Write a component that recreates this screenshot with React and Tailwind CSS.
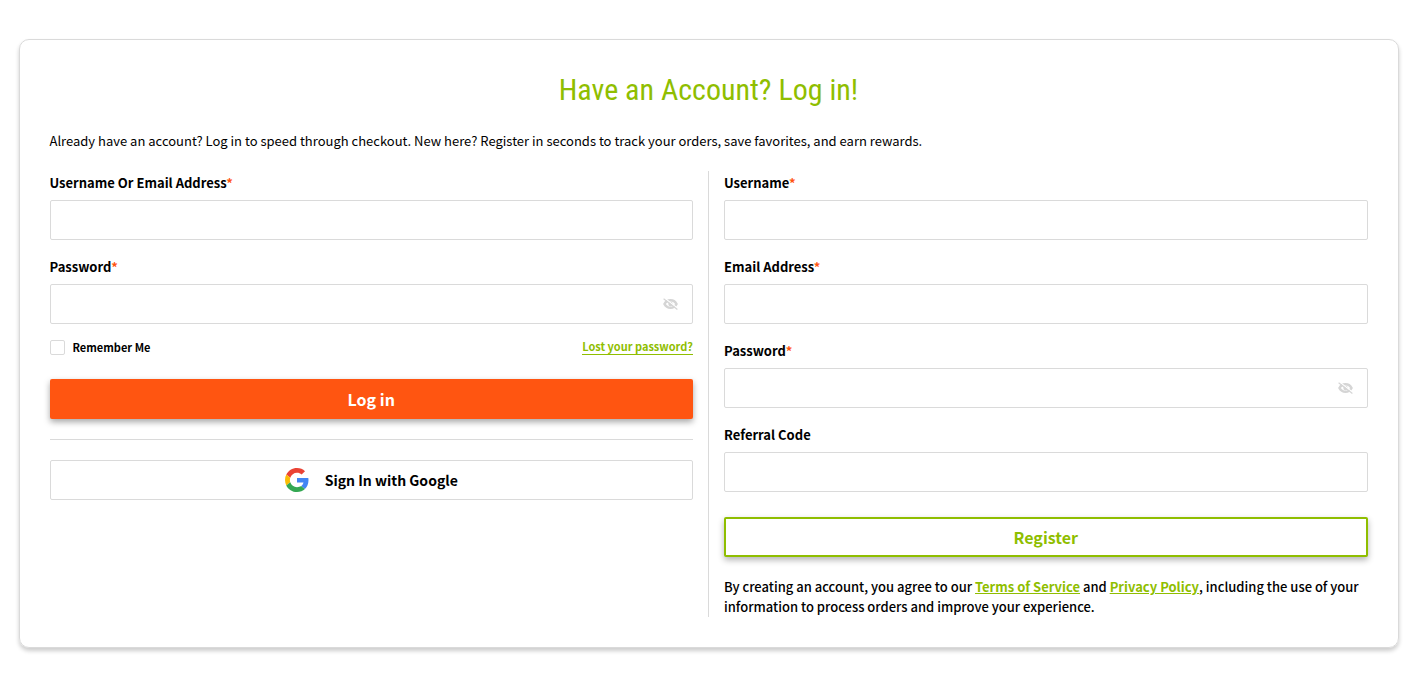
import React, { useState } from 'react';

const INPUT = 'block h-10 w-full rounded-xs border border-[#dadada] bg-white px-3 text-[13px] outline-none focus:border-[#8fbe00]';

const EyeOff = () => (
  <svg viewBox="0 0 15 12" className="h-3 w-[15px]" fill="none" aria-hidden="true">
    <path d="M1.5 6C2.8 3.4 4.9 2.2 7.5 2.2S12.2 3.4 13.5 6C12.2 8.6 10.1 9.8 7.5 9.8S2.8 8.6 1.5 6z" stroke="currentColor" strokeWidth="2.5" />
    <circle cx="7.5" cy="6" r="2.2" fill="currentColor" />
    <path d="M1.5 0l13.5 10.6" stroke="#fff" strokeWidth="1.2" />
    <path d="M.6 .8l13.8 10.6" stroke="currentColor" strokeWidth="1.2" />
  </svg>
);

const Field = ({ id, label, type = 'text', required }) => {
  const [visible, setVisible] = useState(false);
  const isPassword = type === 'password';

  return (
    <div>
      <label htmlFor={id} className="mb-[5px] block text-[13px] leading-6 font-bold">
        {label}
        {required && <span className="text-[#ff5511]">*</span>}
      </label>
      <div className="relative">
        <input
          id={id}
          type={isPassword && visible ? 'text' : type}
          required={required}
          className={INPUT}
        />
        {isPassword && (
          <button
            type="button"
            aria-label="Show password"
            onClick={() => setVisible(!visible)}
            className="absolute inset-y-0 right-[15px] flex items-center text-[#d5d5d5]"
          >
            <EyeOff />
          </button>
        )}
      </div>
    </div>
  );
};

const GoogleLogo = () => (
  <svg viewBox="0 0 48 48" className="h-6 w-6" aria-hidden="true">
    <path fill="#EA4335" d="M24 9.5c3.54 0 6.71 1.22 9.21 3.6l6.85-6.85C35.9 2.38 30.47 0 24 0 14.62 0 6.51 5.38 2.56 13.22l7.98 6.19C12.43 13.72 17.74 9.5 24 9.5z" />
    <path fill="#4285F4" d="M46.98 24.55c0-1.57-.15-3.09-.38-4.55H24v9.02h12.94c-.58 2.96-2.26 5.48-4.78 7.18l7.73 6c4.51-4.18 7.09-10.36 7.09-17.65z" />
    <path fill="#FBBC05" d="M10.53 28.59c-.48-1.45-.76-2.99-.76-4.59s.27-3.14.76-4.59l-7.98-6.19C.92 16.46 0 20.12 0 24c0 3.88.92 7.54 2.56 10.78l7.97-6.19z" />
    <path fill="#34A853" d="M24 48c6.48 0 11.93-2.13 15.89-5.81l-7.73-6c-2.15 1.45-4.92 2.3-8.16 2.3-6.26 0-11.57-4.22-13.47-9.91l-7.98 6.19C6.51 42.62 14.62 48 24 48z" />
  </svg>
);

const LoginForm = () => (
  <form className="flex-1 pr-[15px]" onSubmit={(e) => e.preventDefault()}>
    <div className="flex flex-col gap-[15px]">
      <Field id="login-user" label="Username Or Email Address" required />
      <Field id="login-password" label="Password" type="password" required />
    </div>

    <div className="mt-[11px] flex h-6 items-center justify-between text-[11px] font-bold">
      <label className="flex items-center gap-2">
        <input
          type="checkbox"
          className="h-[15px] w-[15px] appearance-none rounded-xs border border-[#dadada] bg-white checked:bg-[#8fbe00]"
        />
        Remember Me
      </label>
      <a href="#lost" className="border-b border-[#8fbe00] leading-[15px] text-[#8fbe00]">
        Lost your password?
      </a>
    </div>

    <button
      type="submit"
      className="mt-5 block h-10 w-full rounded-xs bg-[#ff5511] text-base font-bold text-white shadow-[0_3px_6px_rgba(0,0,0,0.35)]"
    >
      Log in
    </button>

    <hr className="my-5 border-[#dadada]" />

    <button
      type="button"
      className="flex h-10 w-full items-center justify-center gap-4 rounded-xs border border-[#dadada] bg-white text-sm font-bold"
    >
      <GoogleLogo />
      Sign In with Google
    </button>
  </form>
);

const RegisterForm = () => (
  <form className="flex-1 border-l border-[#dadada] pl-[15px]" onSubmit={(e) => e.preventDefault()}>
    <div className="flex flex-col gap-[15px]">
      <Field id="reg-user" label="Username" required />
      <Field id="reg-email" label="Email Address" type="email" required />
      <Field id="reg-password" label="Password" type="password" required />
      <Field id="reg-referral" label="Referral Code" />
    </div>

    <button
      type="submit"
      className="mt-[25px] block h-10 w-full rounded-xs border-2 border-[#8fbe00] bg-white text-base font-bold text-[#8fbe00] shadow-[0_3px_6px_rgba(0,0,0,0.3)]"
    >
      Register
    </button>

    <p className="mt-5 text-[13px] leading-5 font-medium">
      By creating an account, you agree to our{' '}
      <a href="#terms" className="font-bold text-[#8fbe00] underline">Terms of Service</a> and{' '}
      <a href="#privacy" className="font-bold text-[#8fbe00] underline">Privacy Policy</a>, including the use of
      your information to process orders and improve your experience.
    </p>
  </form>
);

const App = () => (
  <main className="bg-white py-[39px] pr-4 pl-[14px] font-['Noto_Sans_CJK_SC',sans-serif] text-black">
    <section className="mx-auto max-w-[1380px] rounded-[10px] border border-[#dadada] p-[30px] shadow-[0_3px_4px_rgba(0,0,0,0.2)]">
      <h1 className="mb-[21px] text-center font-['Roboto_Condensed',sans-serif] text-[30px] leading-10 text-[#8fbe00]">
        Have an Account? Log in!
      </h1>
      <p className="mb-5 text-[13px] leading-5">
        Already have an account? Log in to speed through checkout. New here? Register in seconds to
        track your orders, save favorites, and earn rewards.
      </p>
      <div className="flex">
        <LoginForm />
        <RegisterForm />
      </div>
    </section>
  </main>
);

export default App;
